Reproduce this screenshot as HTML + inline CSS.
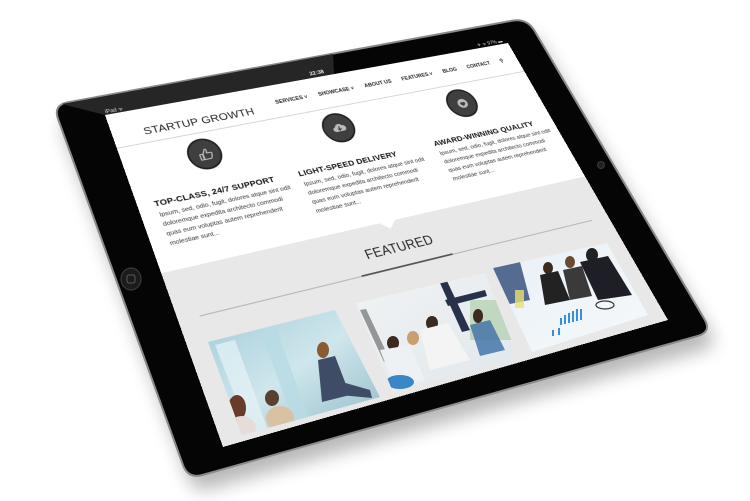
<!DOCTYPE html>
<html><head><meta charset="utf-8">
<style>
html,body{margin:0;padding:0}
body{width:750px;height:501px;overflow:hidden;background:#fff;position:relative;font-family:"Liberation Sans",sans-serif}
#scr{position:absolute;left:0;top:0;width:800px;height:600px;transform-origin:0 0;
transform:matrix3d(0.5884,-0.08284,0,0.00016664,0.14377,0.44732,0,-0.00023718,0,0,1,0,105,115,0,1);background:#fff}
.a{position:absolute;white-space:nowrap}
.circ{position:absolute;width:60px;height:62px;border-radius:50%;background:#3f3f3f;border:3px solid #1e1e1e;box-sizing:border-box}
.circ svg{position:absolute;left:14px;top:15px}
.t{font-size:15.5px;font-weight:bold;color:#111;letter-spacing:0.2px}
.b{font-size:11.5px;line-height:18px;color:#333}
.nav{position:absolute;left:300px;top:31px;width:470px;display:flex;justify-content:space-between;font-size:10.5px;font-weight:bold;color:#222}
</style></head><body>
<svg width="750" height="501" style="position:absolute;left:0;top:0">
<defs><filter id="bl" x="-20%" y="-20%" width="140%" height="140%"><feGaussianBlur stdDeviation="9"/></filter></defs>
<path d="M67.8,102.3 L512.2,20.7 Q527,18 534.6,30.9 L704.4,319.1 Q712,332 697.6,336 L202.4,475 Q188,479 182.9,464.9 L58.1,119.1 Q53,105 67.8,102.3 Z" transform="translate(6,14)" fill="#000" opacity="0.28" filter="url(#bl)"/>
<path d="M67.8,102.3 L512.2,20.7 Q527,18 534.6,30.9 L704.4,319.1 Q712,332 697.6,336 L202.4,475 Q188,479 182.9,464.9 L58.1,119.1 Q53,105 67.8,102.3 Z" fill="#050505" stroke="#8a8a8a" stroke-width="2"/>
<polygon points="62,104 333,54 334,74 105,115" fill="#262626"/>
<ellipse cx="131" cy="279" rx="10" ry="11" fill="#1b1b1b" stroke="#3a3a3a" stroke-width="1.2"/>
<rect x="127" y="275" width="8" height="8" rx="2" fill="none" stroke="#5a5a5a" stroke-width="1"/>
<circle cx="601" cy="165" r="3.5" fill="#222" stroke="#3a3a3a"/>
</svg>

<div id="scr">
  <div class="a" style="left:2px;top:-14px;font-size:10px;color:#ddd">iPad ᯤ</div>
  <div class="a" style="left:385px;top:-15px;font-size:11px;color:#eee;font-weight:bold">22:38</div>
  <div class="a" style="left:735px;top:-15px;font-size:10px;color:#ddd">✈ ᯤ 97% ▬</div>

  <div class="a" style="left:54px;top:35px;font-size:21px;color:#222;letter-spacing:0.3px">STARTUP GROWTH</div>
  <div class="nav"><span>SERVICES ˅</span><span>SHOWCASE ˅</span><span>ABOUT US</span><span>FEATURES ˅</span><span>BLOG</span><span>CONTACT</span><span>&#9906;</span></div>
  <div class="a" style="left:0;top:68px;width:800px;height:2px;background:#d6d6d6"></div>

  <div class="circ" style="left:111px;top:81px"><svg width="28" height="28" viewBox="0 0 28 28"><path d="M4 13h5v11H4z M10 13l5-9c2 0 3 1 2.5 4l-1 4h7c1.5 0 2.5 1.2 2 2.6l-2.5 8c-.4 1-1.2 1.4-2.2 1.4H10z" fill="none" stroke="#bbb" stroke-width="2.2" stroke-linejoin="round"/></svg></div>
  <div class="circ" style="left:362px;top:81px"><svg width="28" height="28" viewBox="0 0 28 28"><path d="M7 21a5 5 0 0 1 0-10 7 7 0 0 1 13-2 5.5 5.5 0 0 1 1 12z" fill="#bbb"/><path d="M14 10v8 M10.5 15l3.5 3.5 3.5-3.5" stroke="#3f3f3f" stroke-width="2" fill="none"/></svg></div>
  <div class="circ" style="left:613px;top:80px"><svg width="28" height="28" viewBox="0 0 28 28"><circle cx="14" cy="14" r="10" fill="#bbb"/><path d="M14 20l-5-5a3 3 0 0 1 5-3 3 3 0 0 1 5 3z" fill="#3f3f3f"/></svg></div>

  <div class="a t" style="left:28px;top:178px">TOP-CLASS, 24/7 SUPPORT</div>
  <div class="a b" style="left:30px;top:199px">Ipsum, sed, odio, fugit, dolores atque sint odit<br>doloremque expedita architecto commodi<br>quas eum voluptas autem reprehenderit<br>molestiae sunt...</div>
  <div class="a t" style="left:285px;top:178px">LIGHT-SPEED DELIVERY</div>
  <div class="a b" style="left:287px;top:199px">Ipsum, sed, odio, fugit, dolores atque sint odit<br>doloremque expedita architecto commodi<br>quas eum voluptas autem reprehenderit<br>molestiae sunt...</div>
  <div class="a t" style="left:550px;top:174px">AWARD-WINNING QUALITY</div>
  <div class="a b" style="left:552px;top:195px">Ipsum, sed, odio, fugit, dolores atque sint odit<br>doloremque expedita architecto commodi<br>quas eum voluptas autem reprehenderit<br>molestiae sunt...</div>

  <div class="a" style="left:0;top:309px;width:800px;height:291px;background:#e8e8e8"></div>
  <div class="a" style="left:385px;top:309px;width:0;height:0;border-left:15px solid transparent;border-right:15px solid transparent;border-top:14px solid #fff"></div>
  <div class="a" style="left:0;top:346px;width:800px;text-align:center;font-size:23px;color:#222;letter-spacing:0.5px">FEATURED</div>
  <div class="a" style="left:35px;top:393px;width:731px;height:2px;background:#b9b9b9"></div>
  <div class="a" style="left:315px;top:392px;width:170px;height:3px;background:#555"></div>
</div>

<svg width="750" height="501" style="position:absolute;left:0;top:0">
<defs>
<clipPath id="c1"><polygon points="208,342 335,310 380,397 242,435"/></clipPath>
<clipPath id="c2"><polygon points="356,303 485,273 518,357 393,392"/></clipPath>
<clipPath id="c3"><polygon points="493,268 607,243 648,315 532,352"/></clipPath>
<linearGradient id="g1" x1="0" y1="0" x2="1" y2="1"><stop offset="0" stop-color="#9fc9d6"/><stop offset="0.5" stop-color="#cfe6ec"/><stop offset="1" stop-color="#8ab6c4"/></linearGradient>
<linearGradient id="g2" x1="0" y1="0" x2="1" y2="1"><stop offset="0" stop-color="#f2f4f5"/><stop offset="1" stop-color="#dfe6ea"/></linearGradient>
<linearGradient id="g3" x1="0" y1="0" x2="1" y2="1"><stop offset="0" stop-color="#e8f0f6"/><stop offset="1" stop-color="#f6f9fb"/></linearGradient>
</defs>
<g clip-path="url(#c1)">
 <rect x="200" y="300" width="190" height="140" fill="url(#g1)"/>
 <polygon points="215,345 235,340 268,430 250,435" fill="#e6f3f6" opacity="0.7"/>
 <polygon points="260,330 275,326 310,420 295,425" fill="#b8dbe4" opacity="0.8"/>
 <ellipse cx="237" cy="408" rx="9" ry="13" fill="#6a3a2a"/>
 <ellipse cx="242" cy="428" rx="14" ry="12" fill="#e8dcd8"/>
 <ellipse cx="272" cy="398" rx="7" ry="8" fill="#5a4030"/>
 <ellipse cx="280" cy="418" rx="14" ry="12" fill="#d9c2a4"/>
 <ellipse cx="323" cy="350" rx="6" ry="8" fill="#8a5a30"/>
 <polygon points="318,360 335,356 350,395 322,402" fill="#3e4c66"/>
 <polygon points="335,380 370,390 372,398 340,395" fill="#3e4c66"/>
</g>
<g clip-path="url(#c2)">
 <rect x="350" y="265" width="175" height="130" fill="url(#g2)"/>
 <polygon points="440,283 447,281 470,330 462,332" fill="#27324a"/>
 <polygon points="445,300 485,290 487,296 448,306" fill="#27324a"/>
 <polygon points="360,310 366,309 390,360 384,362" fill="#5a5a5a" opacity="0.6"/>
 <rect x="470" y="300" width="45" height="40" fill="#a9c9a0" opacity="0.6"/>
 <ellipse cx="432" cy="323" rx="6" ry="7" fill="#3a2a20"/>
 <polygon points="420,330 448,323 470,360 430,370" fill="#f4f4f4"/>
 <ellipse cx="413" cy="338" rx="6" ry="7" fill="#c8a070"/>
 <ellipse cx="393" cy="343" rx="6" ry="7" fill="#3a2a20"/>
 <polygon points="380,350 410,345 425,380 395,388" fill="#eef1f4"/>
 <ellipse cx="400" cy="382" rx="14" ry="7" fill="#3b86c6"/>
 <ellipse cx="478" cy="316" rx="5" ry="7" fill="#3a2a20"/>
 <polygon points="470,325 490,320 505,350 480,356" fill="#3d6ea8" opacity="0.8"/>
</g>
<g clip-path="url(#c3)">
 <rect x="488" y="238" width="165" height="120" fill="url(#g3)"/>
 <polygon points="493,268 520,262 530,300 505,305" fill="#2e4a78" opacity="0.8"/>
 <ellipse cx="548" cy="268" rx="5" ry="6" fill="#3a2a20"/>
 <polygon points="540,275 558,271 570,300 545,305" fill="#222"/>
 <ellipse cx="570" cy="262" rx="5" ry="6" fill="#6a4a30"/>
 <polygon points="563,270 582,266 592,296 570,300" fill="#3a3a3a"/>
 <ellipse cx="592" cy="255" rx="6" ry="7" fill="#222"/>
 <polygon points="580,262 608,256 632,295 598,300" fill="#1e1e26"/>
 <rect x="515" y="290" width="9" height="18" fill="#e8e070" opacity="0.8"/>
 <g fill="#3a8ed6"><rect x="560" y="318" width="2" height="7"/><rect x="564" y="315" width="2" height="9"/><rect x="568" y="313" width="2" height="10"/><rect x="572" y="311" width="2" height="11"/><rect x="576" y="309" width="2" height="12"/><rect x="580" y="309" width="2" height="11"/><rect x="552" y="330" width="2" height="6"/><rect x="558" y="328" width="2" height="7"/></g>
 <ellipse cx="605" cy="305" rx="9" ry="4" fill="none" stroke="#333" stroke-width="1.2"/>
</g>
</svg>
</body></html>
